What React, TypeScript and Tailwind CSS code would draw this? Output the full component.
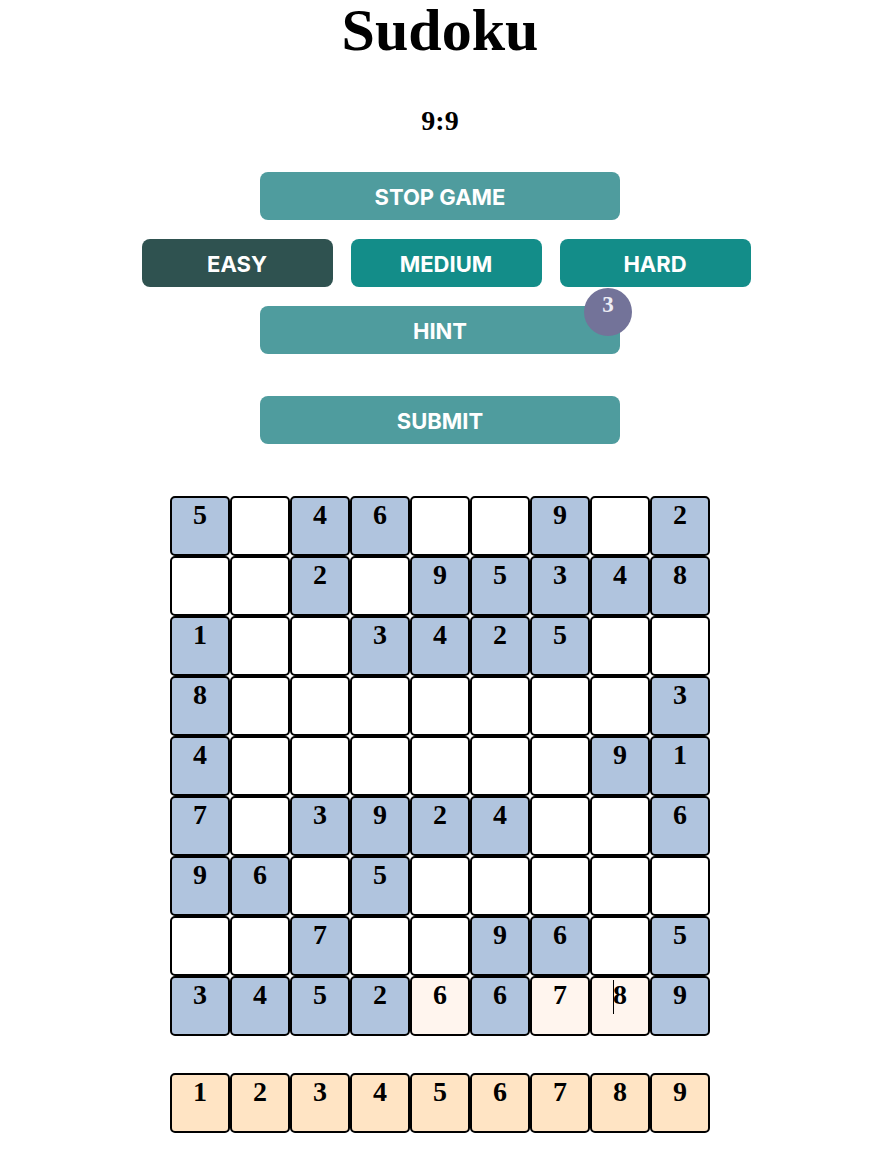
import React from "react";

const puzzle: (number | null)[][] = [
  [5, null, 4, 6, null, null, 9, null, 2],
  [null, null, 2, null, 9, 5, 3, 4, 8],
  [1, null, null, 3, 4, 2, 5, null, null],
  [8, null, null, null, null, null, null, null, 3],
  [4, null, null, null, null, null, null, 9, 1],
  [7, null, 3, 9, 2, 4, null, null, 6],
  [9, 6, null, 5, null, null, null, null, null],
  [null, null, 7, null, null, 9, 6, null, 5],
  [3, 4, 5, 2, null, 6, null, null, 9],
];

// values typed in by the player
const entered: Record<string, number> = {
  "8-4": 6,
  "8-6": 7,
  "8-7": 8,
};

const serif = "font-['Liberation_Serif','Times_New_Roman',serif]";
const sans = "font-['Inter','Roboto',sans-serif]";

const Cell = ({ row, col }: { row: number; col: number }) => {
  const given = puzzle[row][col];
  const typed = entered[`${row}-${col}`];
  const bg = given ? "bg-[#b0c4de]" : typed ? "bg-[#fff5ee]" : "bg-white";
  const focused = row === 8 && col === 7;

  return (
    <div
      className={`relative w-[60px] h-[60px] border-2 border-black rounded-[5px] ${bg} text-center text-[28px] font-bold text-black leading-[24px] pt-[5px] ${serif}`}
    >
      {given ?? typed ?? ""}
      {focused && <span className="absolute left-[21px] top-[2px] w-px h-[34px] bg-black" />}
    </div>
  );
};

export default function App() {
  const btn = `h-[48px] rounded-[8px] text-white font-bold text-[22px] pt-[3px] ${sans} flex items-center justify-center`;

  return (
    <div className="min-h-[1173px] bg-white flex flex-col items-center pl-[3px]">
      <h1 className={`${serif} font-bold text-[60px] leading-[60px] mt-0`}>Sudoku</h1>

      <div className={`${serif} font-bold text-[28px] leading-none mt-[47px]`}>9:9</div>

      <div className="flex flex-col items-center mt-[37px]">
        <button className={`${btn} w-[360px] bg-[#4f9c9e]`}>STOP GAME</button>

        <div className="flex gap-[18px] mt-[19px] ml-[12px]">
          <button className={`${btn} w-[191px] bg-[#2f5250]`}>EASY</button>
          <button className={`${btn} w-[191px] bg-[#138d89]`}>MEDIUM</button>
          <button className={`${btn} w-[191px] bg-[#138d89]`}>HARD</button>
        </div>

        <div className="relative mt-[19px]">
          <button className={`${btn} w-[360px] bg-[#4f9c9e]`}>HINT</button>
          <span
            className={`absolute -top-[18px] -right-[12px] w-[48px] h-[48px] rounded-full bg-[#737399] text-[#eeeef5] text-[23px] font-bold leading-normal text-center ${serif}`}
          >
            3
          </span>
        </div>

        <button className={`${btn} w-[360px] bg-[#4f9c9e] mt-[42px]`}>SUBMIT</button>
      </div>

      <div className="grid grid-cols-9 mt-[52px]">
        {puzzle.map((r, i) => r.map((_, j) => <Cell key={`${i}-${j}`} row={i} col={j} />))}
      </div>

      <div className="flex mt-[37px]">
        {[1, 2, 3, 4, 5, 6, 7, 8, 9].map((n) => (
          <div
            key={n}
            className={`w-[60px] h-[60px] border-2 border-black rounded-[5px] bg-[#ffe4c4] text-center text-[28px] font-bold leading-[24px] pt-[5px] ${serif}`}
          >
            {n}
          </div>
        ))}
      </div>
    </div>
  );
}
